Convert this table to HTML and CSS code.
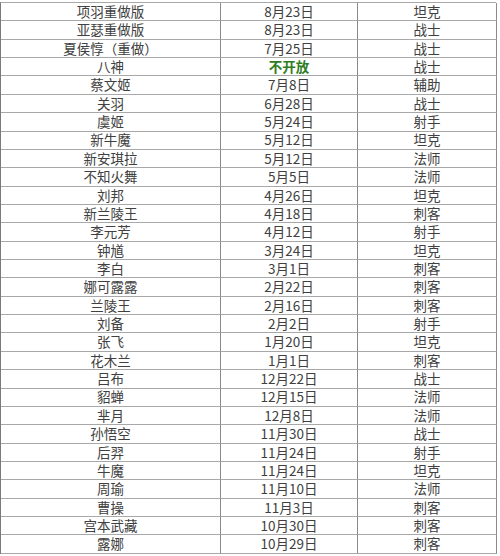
FILE: index.html
```html
<!DOCTYPE html>
<html lang="zh-CN">
<head>
<meta charset="utf-8">
<link rel="stylesheet" href="styles.css">
</head>
<body>
<div class="table">
<div class="c">项羽重做版</div><div class="c">8月23日</div><div class="c">坦克</div>
<div class="c">亚瑟重做版</div><div class="c">8月23日</div><div class="c">战士</div>
<div class="c">夏侯惇（重做）</div><div class="c">7月25日</div><div class="c">战士</div>
<div class="c">八神</div><div class="c green">不开放</div><div class="c">战士</div>
<div class="c">蔡文姬</div><div class="c">7月8日</div><div class="c">辅助</div>
<div class="c">关羽</div><div class="c">6月28日</div><div class="c">战士</div>
<div class="c">虞姬</div><div class="c">5月24日</div><div class="c">射手</div>
<div class="c">新牛魔</div><div class="c">5月12日</div><div class="c">坦克</div>
<div class="c">新安琪拉</div><div class="c">5月12日</div><div class="c">法师</div>
<div class="c">不知火舞</div><div class="c">5月5日</div><div class="c">法师</div>
<div class="c">刘邦</div><div class="c">4月26日</div><div class="c">坦克</div>
<div class="c">新兰陵王</div><div class="c">4月18日</div><div class="c">刺客</div>
<div class="c">李元芳</div><div class="c">4月12日</div><div class="c">射手</div>
<div class="c">钟馗</div><div class="c">3月24日</div><div class="c">坦克</div>
<div class="c">李白</div><div class="c">3月1日</div><div class="c">刺客</div>
<div class="c">娜可露露</div><div class="c">2月22日</div><div class="c">刺客</div>
<div class="c">兰陵王</div><div class="c">2月16日</div><div class="c">刺客</div>
<div class="c">刘备</div><div class="c">2月2日</div><div class="c">射手</div>
<div class="c">张飞</div><div class="c">1月20日</div><div class="c">坦克</div>
<div class="c">花木兰</div><div class="c">1月1日</div><div class="c">刺客</div>
<div class="c">吕布</div><div class="c">12月22日</div><div class="c">战士</div>
<div class="c">貂蝉</div><div class="c">12月15日</div><div class="c">法师</div>
<div class="c">芈月</div><div class="c">12月8日</div><div class="c">法师</div>
<div class="c">孙悟空</div><div class="c">11月30日</div><div class="c">战士</div>
<div class="c">后羿</div><div class="c">11月24日</div><div class="c">射手</div>
<div class="c">牛魔</div><div class="c">11月24日</div><div class="c">坦克</div>
<div class="c">周瑜</div><div class="c">11月10日</div><div class="c">法师</div>
<div class="c">曹操</div><div class="c">11月3日</div><div class="c">刺客</div>
<div class="c">宫本武藏</div><div class="c">10月30日</div><div class="c">刺客</div>
<div class="c">露娜</div><div class="c">10月29日</div><div class="c">刺客</div>
</div>
</body>
</html>
```
FILE: styles.css
```css
html, body {
  margin: 0;
  padding: 0;
  background: #ffffff;
}
body {
  padding: 2px 0 0 0;
  font-family: "Noto Sans CJK SC", "Noto Sans", sans-serif;
  font-size: 13.5px;
  color: #404040;
}
.table {
  display: grid;
  grid-template-columns: 220px 137px 139px;
  grid-auto-rows: 18.37px;
  width: 496px;
  box-sizing: border-box;
  border-top: 1px solid #a8a8a8;
  border-left: 1px solid #7a7a7a;
}
.c {
  box-sizing: border-box;
  border-right: 1px solid #8a8a8a;
  border-bottom: 1px solid #a8a8a8;
  display: flex;
  align-items: center;
  justify-content: center;
  line-height: 1;
  white-space: nowrap;
}
.green {
  color: #2e7d1e;
  font-weight: bold;
}
```
